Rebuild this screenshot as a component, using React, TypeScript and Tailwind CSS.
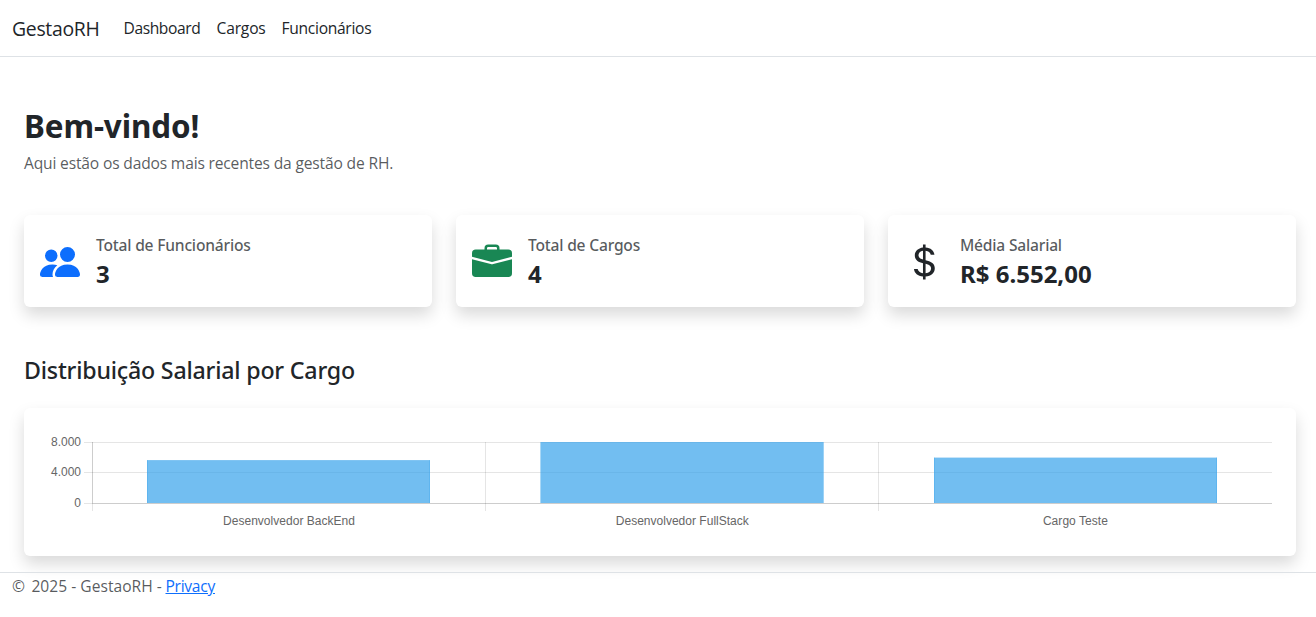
import { BsBriefcaseFill, BsCurrencyDollar, BsPeopleFill } from "react-icons/bs";
import type { ReactNode } from "react";

function StatCard({ icon, title, value }: { icon: ReactNode; title: string; value: string }) {
  return (
    <div className="flex h-[92px] items-center gap-4 rounded-md bg-white px-4 pt-[2px] shadow-[0_8px_16px_rgba(0,0,0,0.15)]">
      {icon}
      <div className="pb-[2px] font-['Noto_Sans',sans-serif]">
        <h2 className="text-[15.6px] leading-5 font-medium tracking-[-0.2px] text-[#212529]/75">{title}</h2>
        <p className="mt-[5px] text-[24px] leading-7 font-bold">{value}</p>
      </div>
    </div>
  );
}

const ticks = [
  { label: "8.000", y: 442.5 },
  { label: "4.000", y: 472.5 },
  { label: "0", y: 503.5 },
];

const bars = [
  { label: "Desenvolvedor BackEnd", x: 147, y: 460.1, w: 283, edge: 0.3, center: 289, width: 132 },
  { label: "Desenvolvedor FullStack", x: 540.4, y: 442, w: 283.3, edge: 0, center: 682.3, width: 133 },
  { label: "Cargo Teste", x: 934, y: 457.6, w: 283, edge: 0.3, center: 1075.4, width: 65 },
];

function SalaryChart() {
  return (
    <svg
      viewBox="24 408 1272 148"
      className="block h-[148px] w-full font-['Liberation_Sans',Arial,sans-serif] text-[12px]"
    >
      {ticks.map((t) => (
        <g key={t.label}>
          <path d={`M84 ${t.y}H1272`} stroke="#000" strokeOpacity="0.1" />
          <text x="81" y={t.y + 3.5} textAnchor="end" fill="#666">
            {t.label}
          </text>
        </g>
      ))}
      <path d="M92.5 442V511M485.5 442V511M878.5 442V511" stroke="#000" strokeOpacity="0.1" />
      <path d="M92.5 442V503M92 503.5H1272" stroke="#000" strokeOpacity="0.1" />
      {bars.map((b) => (
        <g key={b.label}>
          <rect x={b.x} y={b.y} width={b.w} height={503 - b.y} fill="#36a2eb" fillOpacity="0.7" />
          <path
            d={`M${b.x + 0.5} 503V${b.y}M${b.x + b.w - 0.5} 503V${b.y}`}
            fill="none"
            stroke="#36a2eb"
            strokeOpacity={b.edge}
          />
          <text x={b.center} y="525" textAnchor="middle" textLength={b.width} fill="#666">
            {b.label}
          </text>
        </g>
      ))}
    </svg>
  );
}

export default function App() {
  return (
    <div className="flex min-h-[617px] flex-col overflow-hidden bg-white font-['Open_Sans','Noto_Sans',sans-serif] text-[15.6px] leading-6 text-[#212529]">
      <nav className="flex h-[57px] items-center border-b border-[#dee2e6] px-3">
        <a href="#" className="mr-6 w-[88px] pt-px text-[19.4px] leading-[30px] tracking-[-0.3px] whitespace-nowrap">
          GestaoRH
        </a>
        <div className="flex gap-4">
          <a href="#" className="-ml-[0.5px] w-[77px] tracking-[-0.4px]">Dashboard</a>
          <a href="#" className="w-[49px] tracking-[-0.17px]">Cargos</a>
          <a href="#" className="tracking-[-0.29px]">Funcionários</a>
        </div>
      </nav>

      <main className="px-6 pt-[50px] pr-5">
        <h1 className="font-['Noto_Sans',sans-serif] text-[31.4px] leading-[38px] font-bold tracking-[-0.1px]">
          Bem-vindo!
        </h1>
        <p className="mt-[6px] tracking-[-0.17px] text-[#212529]/75">
          Aqui estão os dados mais recentes da gestão de RH.
        </p>

        <section className="mt-10 grid grid-cols-3 gap-6">
          <StatCard
            icon={<BsPeopleFill className="size-10 text-[#0d6efd]" />}
            title="Total de Funcionários"
            value="3"
          />
          <StatCard
            icon={<BsBriefcaseFill className="size-10 text-[#198754]" />}
            title="Total de Cargos"
            value="4"
          />
          <StatCard icon={<BsCurrencyDollar className="size-10" />} title="Média Salarial" value="R$ 6.552,00" />
        </section>

        <h2 className="mt-[49px] font-['Noto_Sans',sans-serif] text-[23.2px] leading-7 font-medium tracking-[-0.2px]">
          Distribuição Salarial por Cargo
        </h2>
        <div className="mt-6 h-[148px] rounded-md bg-white shadow-[0_8px_16px_rgba(0,0,0,0.15)]">
          <SalaryChart />
        </div>
      </main>

      <footer className="mt-4 flex border-t border-[#dee2e6] px-3 pt-px text-[#212529]/75">
        <span className="w-[153.5px] tracking-[0.02px] whitespace-pre">
          <span className="tracking-[1.2px]">© </span>2025 - GestaoRH -
        </span>
        <a href="#" className="tracking-[-0.28px] text-[#0d6efd] underline">Privacy</a>
      </footer>
    </div>
  );
}
